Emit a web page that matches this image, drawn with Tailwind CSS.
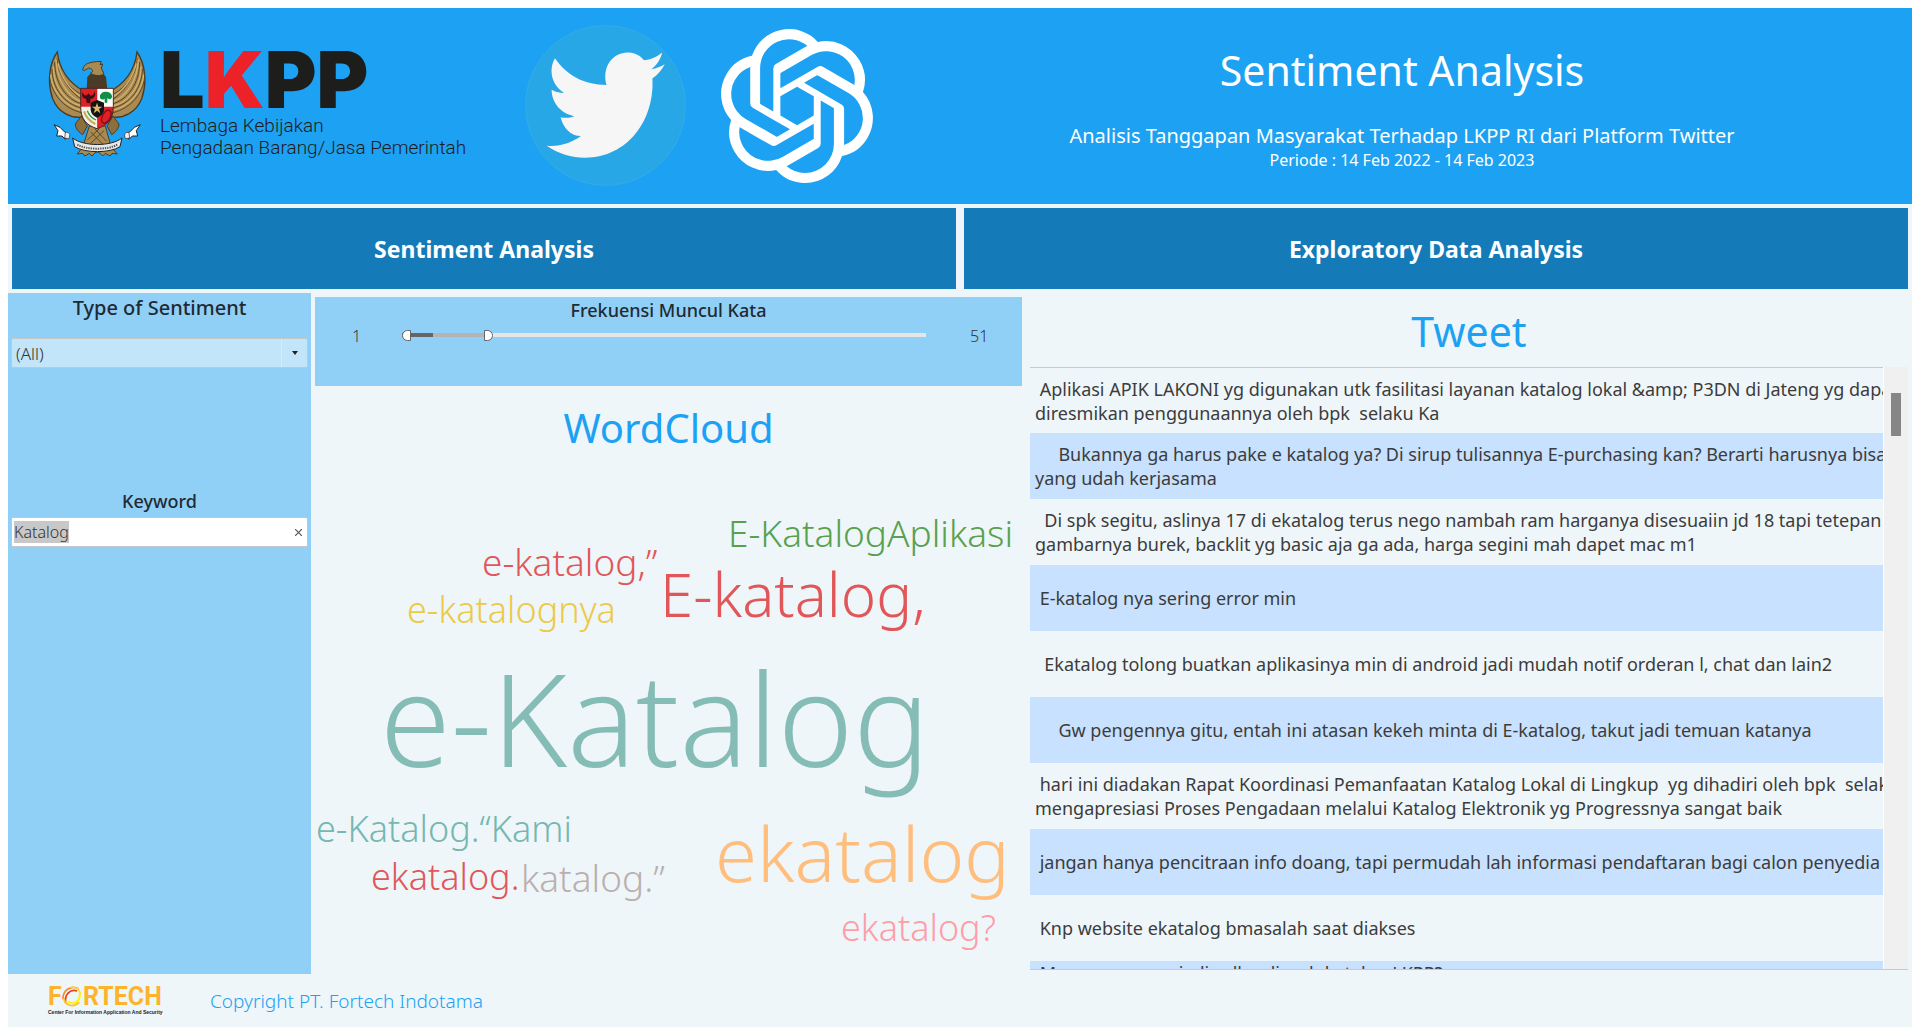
<!DOCTYPE html>
<html lang="id">
<head>
<meta charset="utf-8">
<title>Sentiment Analysis</title>
<script src="https://cdn.jsdelivr.net/npm/@tailwindcss/browser@4"></script>
</head>
<body class="bg-white font-['Noto_Sans',sans-serif] text-[#333]">
<div class="mx-2 border-t-8 border-white bg-[#eef6fa]">

  <header class="flex h-[196px] bg-[#1da1f2]">
    <div class="flex w-[884px] shrink-0 items-start pl-10">
      <svg class="mt-[42px] h-[107px] w-[98px] shrink-0" viewBox="144 150 294 321" role="img" aria-label="Garuda Pancasila">
        <g id="wing">
          <path d="M172 156C146 192 142 252 158 296C174 336 212 358 250 350L256 276C222 258 180 226 172 156Z" fill="#a98a52" stroke="#4d3b22" stroke-width="4"/>
          <g fill="none" stroke="#5a4728" stroke-width="3">
            <path d="M164 186C164 250 200 300 247 312M156 206C156 262 190 312 246 324M150 236C156 280 188 324 244 338M170 176C180 236 214 280 248 300M176 206C190 246 218 270 250 286"/>
          </g>
          <g fill="none" stroke="#d5b36d" stroke-width="4">
            <path d="M168 178C170 244 206 292 246 306M160 200C160 258 196 306 244 318M152 224C156 270 190 318 244 331M174 190C186 240 216 274 248 293"/>
          </g>
          <path d="M244 348L226 372C226 386 238 398 248 404L262 378Z" fill="#8d6f3d" stroke="#4d3b22" stroke-width="3"/>
          <path d="M162 374L180 382L194 396L206 402L196 418L186 408L170 408L174 392Z" fill="#fff" stroke="#222" stroke-width="3"/>
          <path d="M196 398C206 394 214 404 206 416L194 414Z" fill="#eee" stroke="#222" stroke-width="2"/>
        </g>
        <use href="#wing" transform="matrix(-1 0 0 1 583 0)"/>
        <path d="M262 232C270 214 312 214 318 232L322 268H260Z" fill="#4a3a26"/>
        <path d="M248 210C252 192 262 186 304 184L300 194L308 192L304 204L312 222C300 230 280 226 270 220C282 218 280 206 266 204C258 208 252 214 248 210Z" fill="#a98a52" stroke="#4d3b22" stroke-width="3"/>
        <path d="M268 378L316 378L332 436H250Z" fill="#a98a52" stroke="#4d3b22" stroke-width="3"/>
        <path d="M272 396L308 432M284 386L320 424M312 392L272 430M298 386L262 420" stroke="#5a4728" stroke-width="3"/>
        <path d="M232 462L246 444H336L352 462L336 460L330 468L316 460L308 468L296 456L288 456L276 468L268 460L254 468L248 460Z" fill="#a98a52" stroke="#4d3b22" stroke-width="3"/>
        <path d="M218 414C250 440 334 440 366 414L360 440C330 460 254 460 224 440Z" fill="#e8e8e8" stroke="#222" stroke-width="3"/>
        <path d="M232 434C260 450 324 450 352 434" fill="none" stroke="#555" stroke-width="6" stroke-dasharray="4 3"/>
        <path d="M242 265H292V325H242Z" fill="#e01f26"/>
        <path d="M292 265H340V325H292Z" fill="#fff"/>
        <path d="M242 320H292V386C262 376 242 358 242 320Z" fill="#f4f1e6"/>
        <path d="M292 320H340C340 358 322 376 292 386Z" fill="#e01f26"/>
        <path d="M242 265H340V320C340 358 322 376 291 386C260 376 242 358 242 320Z" fill="none" stroke="#4a2a20" stroke-width="3"/>
        <path d="M248 276C252 292 262 286 266 280C270 290 280 290 284 274C290 294 276 298 272 296L270 310L260 308L258 296C248 296 244 286 248 276Z" fill="#3a1012"/>
        <path d="M300 288C302 272 332 270 336 288C338 298 326 300 322 294V308H314V296C308 302 298 298 300 288Z" fill="#0f8f45"/>
        <path d="M252 334C258 352 270 364 286 372" fill="none" stroke="#c9a94f" stroke-width="6"/>
        <path d="M262 332C266 344 276 354 288 360" fill="none" stroke="#2b9a4b" stroke-width="4"/>
        <ellipse cx="319" cy="350" rx="12" ry="21" transform="rotate(28 319 350)" fill="none" stroke="#7d0d12" stroke-width="4"/>
        <path d="M272 308L291 300L312 308V330C310 342 302 348 291 353C280 348 274 342 272 330Z" fill="#141414"/>
        <path d="M291 308L295 320H307L297 327L301 340L291 332L281 340L285 327L275 320H287Z" fill="#dcb765"/>
      </svg>
      <div class="ml-3.5 mt-9 w-[311px] shrink-0 whitespace-nowrap text-[#1d1d1b]">
        <div class="font-['Inter'] text-[79px] leading-[70px] font-black">L<span class="text-[#ed2229]">K</span>PP</div>
        <div class="mt-px font-['Roboto'] text-[19px] leading-[22px] font-light">Lembaga Kebijakan<br>Pengadaan Barang/Jasa Pemerintah</div>
      </div>
      <svg class="ml-[54px] mt-[17px] size-[161px] shrink-0" viewBox="75 75 484 484" role="img" aria-label="Twitter">
        <circle cx="317" cy="317" r="240" fill="#28a7e7" stroke="#33ace9" stroke-width="3"/>
        <path d="M165 175C200 225 250 255 320 255C305 200 340 158 383 158C403 158 420 166 433 181C450 181 470 172 487 158C483 178 472 195 455 208C470 206 483 200 495 193C487 210 474 224 458 236C465 360 385 474 255 474C215 474 175 462 140 438C178 442 215 430 243 409C213 408 190 385 182 352C195 355 210 354 223 349C185 343 155 310 155 270C166 276 178 280 192 279C155 255 145 210 165 175Z" fill="#f6f6f6"/>
      </svg>
      <svg class="ml-[35px] mt-[21px] h-[154px] w-[152px] shrink-0" viewBox="0.15 0 23.7 24" fill="#fff" role="img" aria-label="OpenAI">
        <path d="M22.2819 9.8211a5.9847 5.9847 0 0 0-.5157-4.9108 6.0462 6.0462 0 0 0-6.5098-2.9A6.0651 6.0651 0 0 0 4.9807 4.1818a5.9847 5.9847 0 0 0-3.9977 2.9 6.0462 6.0462 0 0 0 .7427 7.0966 5.98 5.98 0 0 0 .511 4.9107 6.051 6.051 0 0 0 6.5146 2.9001A5.9847 5.9847 0 0 0 13.2599 24a6.0557 6.0557 0 0 0 5.7718-4.2058 5.9894 5.9894 0 0 0 3.9977-2.9001 6.0557 6.0557 0 0 0-.7475-7.0729zm-9.022 12.6081a4.4755 4.4755 0 0 1-2.8764-1.0408l.1419-.0804 4.7783-2.7582a.7948.7948 0 0 0 .3927-.6813v-6.7369l2.02 1.1686a.071.071 0 0 1 .038.052v5.5826a4.504 4.504 0 0 1-4.4945 4.4944zm-9.6607-4.1254a4.4708 4.4708 0 0 1-.5346-3.0137l.142.0852 4.783 2.7582a.7712.7712 0 0 0 .7806 0l5.8428-3.3685v2.3324a.0804.0804 0 0 1-.0332.0615L9.74 19.9502a4.4992 4.4992 0 0 1-6.1408-1.6464zM2.3408 7.8956a4.485 4.485 0 0 1 2.3655-1.9728V11.6a.7664.7664 0 0 0 .3879.6765l5.8144 3.3543-2.0201 1.1685a.0757.0757 0 0 1-.071 0l-4.8303-2.7865A4.504 4.504 0 0 1 2.3408 7.872zm16.5963 3.8558L13.1038 8.364 15.1192 7.2a.0757.0757 0 0 1 .071 0l4.8303 2.7913a4.4944 4.4944 0 0 1-.6765 8.1042v-5.6772a.79.79 0 0 0-.407-.667zm2.0107-3.0231l-.142-.0852-4.7735-2.7818a.7759.7759 0 0 0-.7854 0L9.409 9.2297V6.8974a.0662.0662 0 0 1 .0284-.0615l4.8303-2.7866a4.4992 4.4992 0 0 1 6.6802 4.66zM8.3065 12.863l-2.02-1.1638a.0804.0804 0 0 1-.038-.0567V6.0742a4.4992 4.4992 0 0 1 7.3757-3.4537l-.142.0805L8.704 5.459a.7948.7948 0 0 0-.3927.6813zm1.0976-2.3654l2.602-1.4998 2.6069 1.4998v2.9994l-2.5974 1.4997-2.6067-1.4997Z"/>
      </svg>
    </div>
    <div class="min-w-0 flex-1 pt-[34px] text-center text-white">
      <h1 class="text-[41px] leading-[56px]">Sentiment Analysis</h1>
      <p class="mt-6 text-[20px] leading-7">Analisis Tanggapan Masyarakat Terhadap LKPP RI dari Platform Twitter</p>
      <p class="text-base leading-5">Periode : 14 Feb 2022 - 14 Feb 2023</p>
    </div>
  </header>

  <nav class="mx-1 mt-1 grid h-[81px] grid-cols-2 gap-2 text-[23px] font-bold text-white">
    <a href="#sentiment" class="flex items-center justify-center bg-[#147ab8] pt-0.5">Sentiment Analysis</a>
    <a href="#eda" class="flex items-center justify-center bg-[#147ab8] pt-0.5">Exploratory Data Analysis</a>
  </nav>

  <main class="mt-1 flex h-[681px]">
    <aside class="flex w-[303px] shrink-0 flex-col bg-[#90d0f6] px-[3px] pt-px">
      <label for="type" class="text-center text-[20px] leading-7 font-medium text-[#1f2a33]">Type of Sentiment</label>
      <div class="relative mt-4">
        <select id="type" class="block h-[30px] w-full appearance-none rounded-xs border border-[#c4c8ca] bg-[#c2e5fa] px-1 pt-0.5 text-[17px] font-light">
          <option>(All)</option>
          <option>Positive</option>
          <option>Negative</option>
        </select>
        <div class="pointer-events-none absolute inset-y-px right-px flex w-[26px] items-center justify-center border-l border-[#d5edfb]">
          <svg class="h-1 w-1.5" viewBox="0 0 6 4" fill="#222"><path d="M0 0H6L3 4Z"/></svg>
        </div>
      </div>
      <label for="keyword" class="mt-[119px] text-center text-[18px] leading-7 font-medium text-[#1f2a33]">Keyword</label>
      <div class="relative mt-0.5">
        <input id="keyword" type="text" value="Katalog" class="block h-[30px] w-full rounded-xs border border-[#c4c8ca] bg-white px-0.5 text-base font-light outline-none selection:bg-[#c8c8c8] selection:text-[#333]">
        <button type="button" aria-label="Clear keyword" class="absolute inset-y-0 right-0 flex w-[19px] items-center justify-center">
          <svg class="size-[7px]" viewBox="0 0 7 7" stroke="#555" stroke-width="1.2"><path d="M0 0L7 7M7 0L0 7"/></svg>
        </button>
      </div>
    </aside>

    <section id="sentiment" class="ml-1 flex min-w-0 flex-[707] flex-col pt-1">
      <div class="h-[89px] bg-[#90d0f6] pt-px">
        <h2 class="text-center text-[18px] leading-6 font-medium text-[#1f2a33]">Frekuensi Muncul Kata</h2>
        <div class="flex h-[26px] items-center text-base font-light">
          <span class="w-[87px] pt-px pl-[37px]">1</span>
          <div class="relative h-3 flex-1">
            <div class="absolute inset-x-0 top-1 flex h-1 bg-[#e6e6e6]">
              <div class="w-[6%] bg-[#666]"></div>
              <div class="w-[10%] bg-[#b4b4b4]"></div>
            </div>
            <input type="range" min="1" max="51" value="1" aria-label="Frekuensi minimum" class="pointer-events-none absolute inset-0 m-0 h-3 w-full appearance-none bg-transparent [&::-webkit-slider-thumb]:pointer-events-auto [&::-webkit-slider-thumb]:h-[11px] [&::-webkit-slider-thumb]:w-[9px] [&::-webkit-slider-thumb]:appearance-none [&::-webkit-slider-thumb]:rounded-l-full [&::-webkit-slider-thumb]:border [&::-webkit-slider-thumb]:border-[#666] [&::-webkit-slider-thumb]:bg-white">
            <input type="range" min="1" max="51" value="9" aria-label="Frekuensi maksimum" class="pointer-events-none absolute inset-0 m-0 h-3 w-full appearance-none bg-transparent [&::-webkit-slider-thumb]:pointer-events-auto [&::-webkit-slider-thumb]:h-[11px] [&::-webkit-slider-thumb]:w-[9px] [&::-webkit-slider-thumb]:appearance-none [&::-webkit-slider-thumb]:rounded-r-full [&::-webkit-slider-thumb]:border [&::-webkit-slider-thumb]:border-[#666] [&::-webkit-slider-thumb]:bg-white">
          </div>
          <span class="w-[96px] pt-px pl-11">51</span>
        </div>
      </div>
      <h2 class="mt-3.5 text-center text-[40px] leading-[56px] text-[#1da1f2]">WordCloud</h2>
      <div class="relative flex-1 text-[36px] leading-none font-light whitespace-nowrap">
        <span class="absolute left-[413px] top-[58px] text-[37px] text-[#59a14f]">E-KatalogAplikasi</span>
        <span class="absolute left-[167px] top-[87px] text-[37px] text-[#e15759]">e-katalog,”</span>
        <span class="absolute left-[92px] top-[136px] text-[#edc948]">e-katalognya</span>
        <span class="absolute left-[345px] top-[108px] text-[60px] text-[#e15759]">E-katalog,</span>
        <span class="absolute left-[65px] top-[198px] text-[128px] text-[#86bcb6]">e-Katalog</span>
        <span class="absolute left-px top-[355px] text-[#76b7b2]">e-Katalog.“Kami</span>
        <span class="absolute left-[56px] top-[403px] text-[#e15759]">ekatalog.</span>
        <span class="absolute left-[206px] top-[403px] text-[37px] text-[#bab0ac]">katalog.”</span>
        <span class="absolute left-[400px] top-[359px] text-[76px] text-[#ffbe7d]">ekatalog</span>
        <span class="absolute left-[526px] top-[454px] text-[#ff9da7]">ekatalog?</span>
      </div>
    </section>

    <section class="mr-1 ml-2 flex min-w-0 flex-[878] flex-col pt-2.5">
      <h2 class="text-center text-[41px] leading-[56px] text-[#1da1f2]">Tweet</h2>
      <div class="mt-2 flex h-[603px] border-b border-[#c8cbcd]">
        <div class="min-w-0 flex-1 overflow-hidden border-t border-[#c8cbcd]">
          <table class="w-full table-fixed text-[18px] leading-6 text-[#3c3c3c]">
            <tbody class="[&_td]:overflow-hidden [&_td]:py-0 [&_td]:pl-[5px] [&_td]:whitespace-pre [&_tr]:h-[66px] [&_tr:nth-child(even)]:bg-[#c7e1fe]">
              <tr class="h-[65px]!"><td> Aplikasi APIK LAKONI yg digunakan utk fasilitasi layanan katalog lokal &amp;amp; P3DN di Jateng yg dapat
diresmikan penggunaannya oleh bpk  selaku Ka</td></tr>
              <tr><td>     Bukannya ga harus pake e katalog ya? Di sirup tulisannya E-purchasing kan? Berarti harusnya bisa
yang udah kerjasama</td></tr>
              <tr><td>  Di spk segitu, aslinya 17 di ekatalog terus nego nambah ram harganya disesuaiin jd 18 tapi tetepan
gambarnya burek, backlit yg basic aja ga ada, harga segini mah dapet mac m1</td></tr>
              <tr><td> E-katalog nya sering error min</td></tr>
              <tr><td>  Ekatalog tolong buatkan aplikasinya min di android jadi mudah notif orderan l, chat dan lain2</td></tr>
              <tr><td>     Gw pengennya gitu, entah ini atasan kekeh minta di E-katalog, takut jadi temuan katanya</td></tr>
              <tr><td> hari ini diadakan Rapat Koordinasi Pemanfaatan Katalog Lokal di Lingkup  yg dihadiri oleh bpk  selaku
mengapresiasi Proses Pengadaan melalui Katalog Elektronik yg Progressnya sangat baik</td></tr>
              <tr><td> jangan hanya pencitraan info doang, tapi permudah lah informasi pendaftaran bagi calon penyedia e</td></tr>
              <tr><td> Knp website ekatalog bmasalah saat diakses</td></tr>
              <tr><td class="align-top"> Mau nanya cara jadi seller di web katalog LKPP?</td></tr>
            </tbody>
          </table>
        </div>
        <div class="w-[25px] shrink-0 border-l border-white bg-[#f0f0f0] pt-[26px]">
          <div class="ml-[7px] h-[43px] w-2.5 bg-[#868686]"></div>
        </div>
      </div>
    </section>
  </main>

  <footer class="flex h-[53px] items-center pl-10">
    <div class="w-[162px] whitespace-nowrap">
      <div class="flex h-[22px] items-center font-['Roboto'] text-[25px] leading-[22px] font-bold text-[#fdb32b]">
        <span class="w-3">F</span>
        <svg class="mx-px size-[21px] shrink-0" viewBox="0 0 60 60" fill="none" role="img" aria-label="O">
          <path d="M50 8C30 -4 4 12 6 38" stroke="#f58a1f" stroke-width="5"/>
          <path d="M46 14C26 8 10 24 13 48" stroke="#e5451d" stroke-width="5"/>
          <path d="M8 34C10 56 36 64 52 46" stroke="#fbc32d" stroke-width="5"/>
          <path d="M20 44C34 56 56 46 54 18" stroke="#fdf21a" stroke-width="6"/>
          <path d="M26 4C40 2 52 8 56 22" stroke="#fdd835" stroke-width="4"/>
        </svg>
        <span>RTECH</span>
      </div>
      <div class="font-['Liberation_Sans'] text-[5px] leading-[8px] font-bold text-[#222]">Center For Information Application And Security</div>
    </div>
    <p class="text-[19px] leading-6 font-light text-[#1da1f2]">Copyright PT. Fortech Indotama</p>
  </footer>
</div>
<script>
  const keyword = document.getElementById('keyword');
  keyword.focus();
  keyword.select();
</script>
</body>
</html>
